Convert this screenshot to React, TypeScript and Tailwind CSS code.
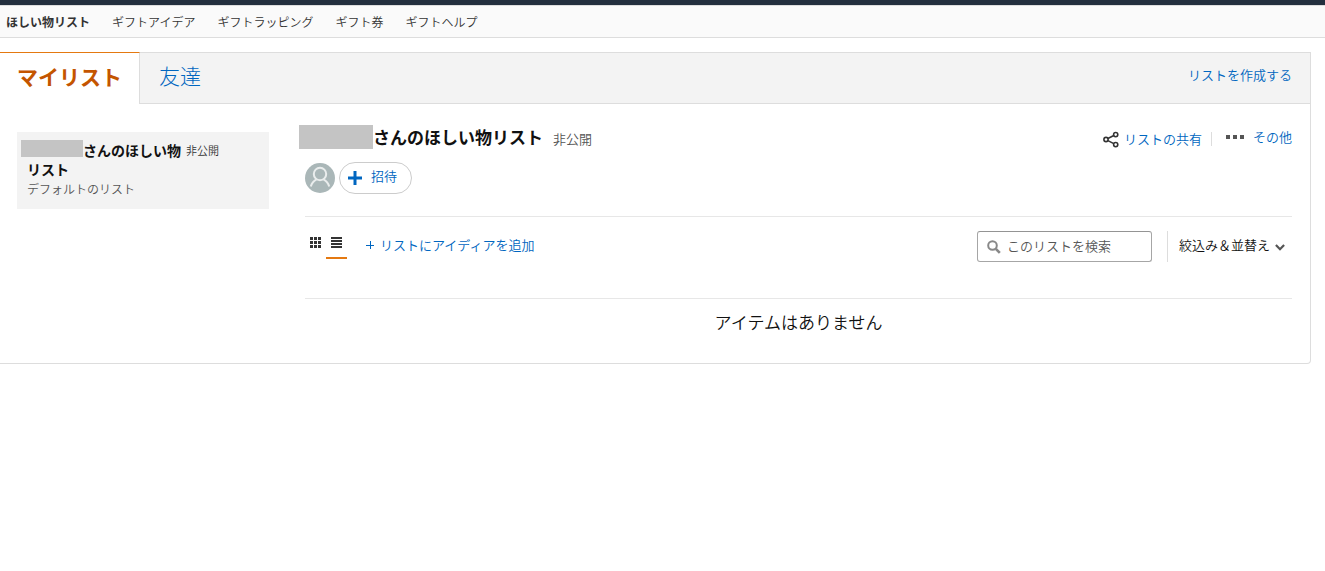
import type { ReactNode } from "react";

const NAV_ITEMS = ["ギフトアイデア", "ギフトラッピング", "ギフト券", "ギフトヘルプ"];

function TopNav() {
  return (
    <header className="border-t-[5px] border-[#232f3e]">
      <nav className="flex h-[33px] items-center gap-[22px] border-y border-[#ddd] bg-[#fafafa] px-1.5 text-[12px] leading-[18px] text-[#333]">
        <a href="#lists" className="font-bold">
          ほしい物リスト
        </a>
        {NAV_ITEMS.map((item) => (
          <a key={item} href="#gift">
            {item}
          </a>
        ))}
      </nav>
    </header>
  );
}

function Tabs() {
  return (
    <div className="flex h-[51px] border-b border-[#ddd] bg-[#f3f3f3] text-[21px] leading-[28px]">
      <a
        href="#my-lists"
        className="-mt-px -mb-px border-t border-r border-t-[#e47911] border-r-[#ddd] bg-white px-[17px] pt-[9px] font-bold text-[#c45500]"
      >
        マイリスト
      </a>
      <a href="#friends" className="pt-2 pl-[19px] font-light text-[#0066c0]">
        友達
      </a>
      <a href="#create" className="mt-3 mr-[18px] ml-auto text-[13px] leading-[20px] text-[#0066c0]">
        リストを作成する
      </a>
    </div>
  );
}

function Sidebar() {
  return (
    <aside className="w-[252px] shrink-0">
      <a href="#default-list" className="block h-[77px] bg-[#f3f3f3] pt-2 pl-1">
        <div className="flex items-start">
          <span className="h-[17px] w-[62px] bg-[#c4c4c4]" />
          <span className="text-[14px] leading-[20px] font-bold text-[#111]">さんのほしい物</span>
          <span className="ml-[5px] text-[11px] leading-[20px] text-[#333]">非公開</span>
        </div>
        <div className="-mt-px pl-1.5">
          <p className="text-[14px] leading-[20px] font-bold text-[#111]">リスト</p>
          <p className="text-[12px] leading-[20px] text-[#555]">デフォルトのリスト</p>
        </div>
      </a>
    </aside>
  );
}

function ShareIcon() {
  return (
    <svg width="16" height="17" viewBox="0 0 16 17" fill="none" stroke="#333" strokeWidth="1.6" aria-hidden="true">
      <circle cx="3" cy="8.5" r="2.1" />
      <circle cx="12.7" cy="3.6" r="2.1" />
      <circle cx="12.7" cy="13.6" r="2.1" />
      <path d="M4.9 7.5 10.8 4.5M4.9 9.6l5.9 3" />
    </svg>
  );
}

function AvatarIcon() {
  return (
    <svg width="30" height="30" viewBox="0 0 30 30" fill="none" aria-hidden="true">
      <circle cx="15" cy="15" r="15" fill="#aab7b8" />
      <circle cx="15" cy="11" r="6.2" stroke="#eaeded" strokeWidth="2" />
      <path d="M5.8 23.5c.9-3.4 2.8-5.7 5.7-7.2M24.2 23.5c-.9-3.4-2.8-5.7-5.7-7.2" stroke="#eaeded" strokeWidth="2" />
    </svg>
  );
}

function GridIcon() {
  return (
    <svg width="11" height="11" viewBox="0 0 11 11" fill="#333" aria-hidden="true">
      <path d="M0 0h3v3H0zM4 0h3v3H4zM8 0h3v3H8zM0 4h3v3H0zM4 4h3v3H4zM8 4h3v3H8zM0 8h3v3H0zM4 8h3v3H4zM8 8h3v3H8z" />
    </svg>
  );
}

function RowsIcon() {
  return (
    <svg width="11" height="11" viewBox="0 0 11 11" fill="#333" aria-hidden="true">
      <path d="M0 0h11v2H0zM0 3h11v2H0zM0 6h11v2H0zM0 9h11v2H0z" />
    </svg>
  );
}

function ListHeader() {
  return (
    <div className="flex h-7 items-start justify-between">
      <div className="-ml-1.5 flex items-start">
        <span className="h-6 w-[74px] bg-[#c4c4c4]" />
        <h1 className="text-[17px] leading-[24px] font-bold text-[#111]">さんのほしい物リスト</h1>
        <span className="mt-1 ml-2.5 text-[13px] leading-[20px] text-[#555]">非公開</span>
      </div>
      <div className="mt-0.5 flex items-center text-[13px] leading-[20px] text-[#0066c0]">
        <a href="#share" className="flex items-center gap-[5px]">
          <ShareIcon />
          リストの共有
        </a>
        <span className="mx-[9px] h-3.5 w-px bg-[#ddd]" />
        <button type="button" className="ml-[5px] flex items-center gap-[9px] pb-1">
          <svg width="18" height="4" viewBox="0 0 18 4" fill="#555" aria-hidden="true">
            <path d="M0 0h4v4H0zM7 0h4v4H7zM14 0h4v4h-4z" />
          </svg>
          その他
        </button>
      </div>
    </div>
  );
}

function ViewButton({ label, active, children }: { label: string; active?: boolean; children: ReactNode }) {
  return (
    <button
      type="button"
      aria-label={label}
      className={
        active
          ? "flex h-[29px] w-[21px] justify-center border-b-2 border-[#e47911] pt-[7px]"
          : "flex h-[29px] w-[21px] justify-center pt-[7px]"
      }
    >
      {children}
    </button>
  );
}

function Toolbar() {
  return (
    <div className="mt-[22px] flex h-[83px] items-start border-y border-[#e7e7e7] pt-[13px] text-[13px] leading-[20px]">
      <ViewButton label="グリッド表示">
        <GridIcon />
      </ViewButton>
      <ViewButton label="リスト表示" active>
        <RowsIcon />
      </ViewButton>
      <button type="button" className="mt-[5px] ml-[18px] flex items-center gap-[5px] text-[#0066c0]">
        <svg width="10" height="10" viewBox="0 0 10 10" stroke="#0066c0" aria-hidden="true">
          <path d="M1 5.5h8M5.5 1v8" />
        </svg>
        リストにアイディアを追加
      </button>
      <label className="mt-px ml-auto flex h-[31px] w-[175px] items-center rounded-[3px] border border-[#a6a6a6] border-t-[#949494] pl-[9px]">
        <svg width="14" height="14" viewBox="0 0 14 14" fill="none" stroke="#888" className="shrink-0" aria-hidden="true">
          <circle cx="5.5" cy="5.5" r="4.3" strokeWidth="2" />
          <path d="m8.8 8.8 4 4" strokeWidth="2.6" />
        </svg>
        <input
          type="text"
          aria-label="このリストを検索"
          placeholder="このリストを検索"
          className="ml-1.5 w-full min-w-0 pb-0.5 outline-none placeholder:text-[#555]"
        />
      </label>
      <button
        type="button"
        className="mt-px ml-[15px] flex h-[31px] items-center gap-[5px] border-l border-[#ddd] pr-[7px] pl-[11px] text-[#111]"
      >
        <span className="pb-1">絞込み＆並替え</span>
        <svg width="10" height="8" viewBox="0 0 10 8" fill="none" stroke="#555" strokeWidth="2.2" aria-hidden="true">
          <path d="m.9 1.9 4.1 4.3 4.1-4.3" />
        </svg>
      </button>
    </div>
  );
}

export default function App() {
  return (
    <div className="min-h-screen bg-white font-['Noto_Sans_CJK_JP',sans-serif] font-[350]">
      <TopNav />
      <div className="mt-3.5 mr-3.5 rounded-br-[4px] border border-l-0 border-[#ddd]">
        <Tabs />
        <div className="flex gap-9 pr-[18px] pl-[17px]">
          <div className="pt-7">
            <Sidebar />
          </div>
          <main className="min-w-0 flex-1 pt-[21px] pb-[29px]">
            <ListHeader />
            <div className="mt-[9px] flex items-center gap-1">
              <AvatarIcon />
              <button
                type="button"
                className="flex h-8 items-center gap-[9px] rounded-full border border-[#ccc] pr-3.5 pl-2 text-[13px] leading-[20px] text-[#0066c0]"
              >
                <svg width="14" height="14" viewBox="0 0 14 14" stroke="#0066c0" strokeWidth="3" aria-hidden="true">
                  <path d="M0 7h14M7 0v14" />
                </svg>
                <span className="pb-1">招待</span>
              </button>
            </div>
            <Toolbar />
            <p className="mt-[11px] text-center text-[17px] leading-[24px] text-[#111]">アイテムはありません</p>
          </main>
        </div>
      </div>
    </div>
  );
}
